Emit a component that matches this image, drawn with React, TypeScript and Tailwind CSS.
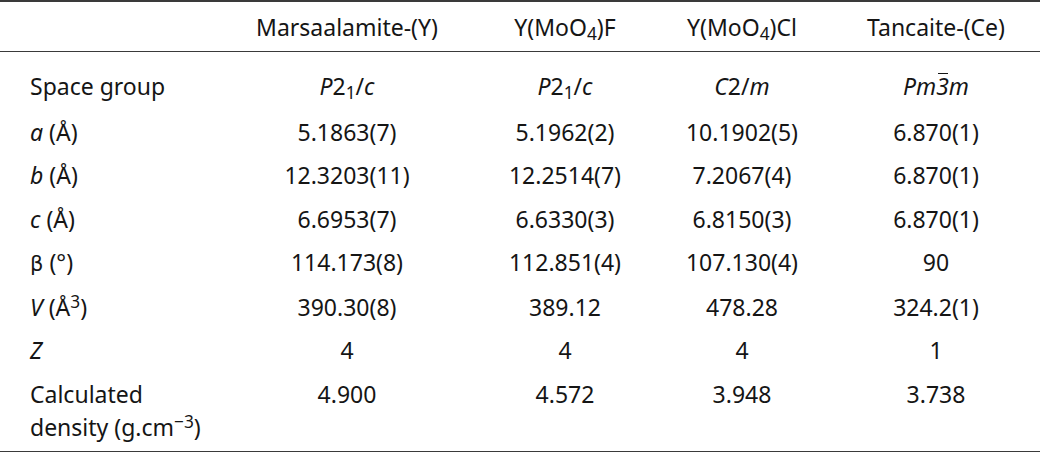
import type { ReactNode } from 'react'

const cols = 'grid grid-cols-[216px_262px_174px_180px_208px]'

function Bar3() {
  return (
    <span className="relative inline-block">
      3
      <span className="absolute left-[2px] right-[1px] top-[3px] h-[1.5px] bg-[#151515]" />
    </span>
  )
}

type Row = { label: ReactNode; values: ReactNode[]; className: string }

const rows: Row[] = [
  {
    label: 'Space group',
    values: [
      <span key="a">
        <i>P</i>2<sub>1</sub>/<i>c</i>
      </span>,
      <span key="b">
        <i>P</i>2<sub>1</sub>/<i>c</i>
      </span>,
      <span key="c">
        <i>C</i>2/<i>m</i>
      </span>,
      <i key="d">
        Pm<Bar3 />m
      </i>,
    ],
    className: 'pt-[17.6px] pb-[8px]',
  },
  {
    label: (
      <>
        <i>a</i> (Å)
      </>
    ),
    values: ['5.1863(7)', '5.1962(2)', '10.1902(5)', '6.870(1)'],
    className: 'py-[5px]',
  },
  {
    label: (
      <>
        <i>b</i> (Å)
      </>
    ),
    values: ['12.3203(11)', '12.2514(7)', '7.2067(4)', '6.870(1)'],
    className: 'py-[5px]',
  },
  {
    label: (
      <>
        <i>c</i> (Å)
      </>
    ),
    values: ['6.6953(7)', '6.6330(3)', '6.8150(3)', '6.870(1)'],
    className: 'py-[5px]',
  },
  {
    label: (
      <>
        <span className="font-['DejaVu_Sans',sans-serif] text-[21px]">β</span> (°)
      </>
    ),
    values: ['114.173(8)', '112.851(4)', '107.130(4)', '90'],
    className: 'py-[5px]',
  },
  {
    label: (
      <>
        <i>V</i> (Å<sup>3</sup>)
      </>
    ),
    values: ['390.30(8)', '389.12', '478.28', '324.2(1)'],
    className: 'py-[5px]',
  },
  {
    label: <i>Z</i>,
    values: ['4', '4', '4', '1'],
    className: 'py-[5px]',
  },
  {
    label: (
      <>
        Calculated
        <br />
        density (g.cm<sup>−3</sup>)
      </>
    ),
    values: ['4.900', '4.572', '3.948', '3.738'],
    className: 'pt-[5px] pb-[6.4px]',
  },
]

export default function App() {
  return (
    <div className="w-[1040px] h-[452px] bg-white font-['Noto_Sans',sans-serif] text-[23px] leading-[33.33px] text-[#151515]">
      <div className="border-t-2 border-b-2 border-[#3a3a3a]">
        <div className={`${cols} border-b border-[#3a3a3a] pt-[8.6px] pb-[7px]`}>
          <div />
          <div className="text-center">Marsaalamite-(Y)</div>
          <div className="text-center">
            Y(MoO<sub>4</sub>)F
          </div>
          <div className="text-center">
            Y(MoO<sub>4</sub>)Cl
          </div>
          <div className="text-center">Tancaite-(Ce)</div>
        </div>
        {rows.map((row, i) => (
          <div key={i} className={`${cols} ${row.className}`}>
            <div className="pl-[30px] whitespace-nowrap">{row.label}</div>
            {row.values.map((v, j) => (
              <div key={j} className="text-center">
                {v}
              </div>
            ))}
          </div>
        ))}
      </div>
    </div>
  )
}
